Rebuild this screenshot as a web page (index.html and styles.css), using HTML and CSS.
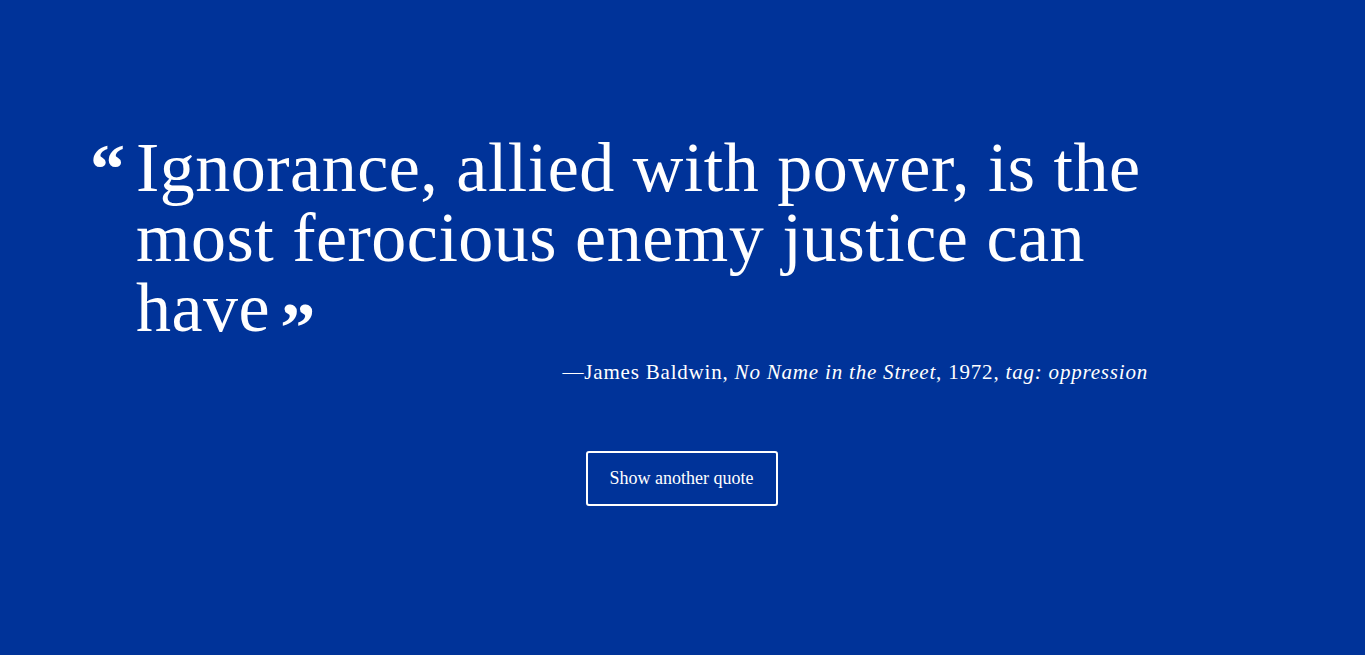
FILE: index.html
```html
<!DOCTYPE html>
<html lang="en">
<head>
<meta charset="utf-8">
<title>Random Quote</title>
<link rel="stylesheet" href="styles.css">
</head>
<body>
<main class="page">
  <section class="quote-card">
    <blockquote class="quote">
      <span class="mark mark-open">&ldquo;</span>
      <p class="quote-text">Ignorance, allied with power, is the most ferocious enemy justice can have<span class="mark mark-close">&rdquo;</span></p>
    </blockquote>
    <p class="attribution">&mdash;James Baldwin, <em>No Name in the Street</em>, 1972, <em>tag: oppression</em></p>
  </section>
  <div class="actions">
    <button class="btn" type="button">Show another quote</button>
  </div>
</main>
</body>
</html>
```
FILE: styles.css
```css
html, body {
  margin: 0;
  padding: 0;
}
body {
  background: #003399;
  color: #ffffff;
  font-family: "Liberation Serif", "DejaVu Serif", serif;
  min-height: 655px;
}
.page {
  padding-top: 133px;
}
.quote-card {
  margin-left: 90px;
  width: 1058px;
}
.quote {
  margin: 0;
  display: flex;
  align-items: flex-start;
}
.mark {
  font-family: "Liberation Serif", serif;
  font-weight: bold;
  letter-spacing: 0;
}
.mark-open {
  width: 46px;
  flex: none;
  font-size: 70px;
  line-height: 1;
  margin-top: 1px;
  margin-left: 0;
}
.mark-close {
  display: inline-block;
  font-size: 70px;
  line-height: 30px;
  height: 30px;
  vertical-align: top;
  overflow: visible;
  position: relative;
  top: 40px;
  margin-left: 10px;
}
.quote-text {
  margin: 0;
  font-size: 70px;
  line-height: 70px;
  letter-spacing: 0.5px;
  width: 1020px;
}
.attribution {
  margin: 15px 0 0;
  text-align: right;
  font-size: 21px;
  line-height: 28px;
  letter-spacing: 0.8px;
}
.attribution em {
  font-style: italic;
}
.actions {
  display: flex;
  justify-content: center;
  margin-top: 65px;
}
.btn {
  background: transparent;
  color: #ffffff;
  border: 2px solid #ffffff;
  border-radius: 3px;
  width: 192px;
  height: 55px;
  margin-right: 2px;
  font-family: "Liberation Serif", serif;
  font-size: 18px;
  letter-spacing: 0;
  cursor: pointer;
}
```
